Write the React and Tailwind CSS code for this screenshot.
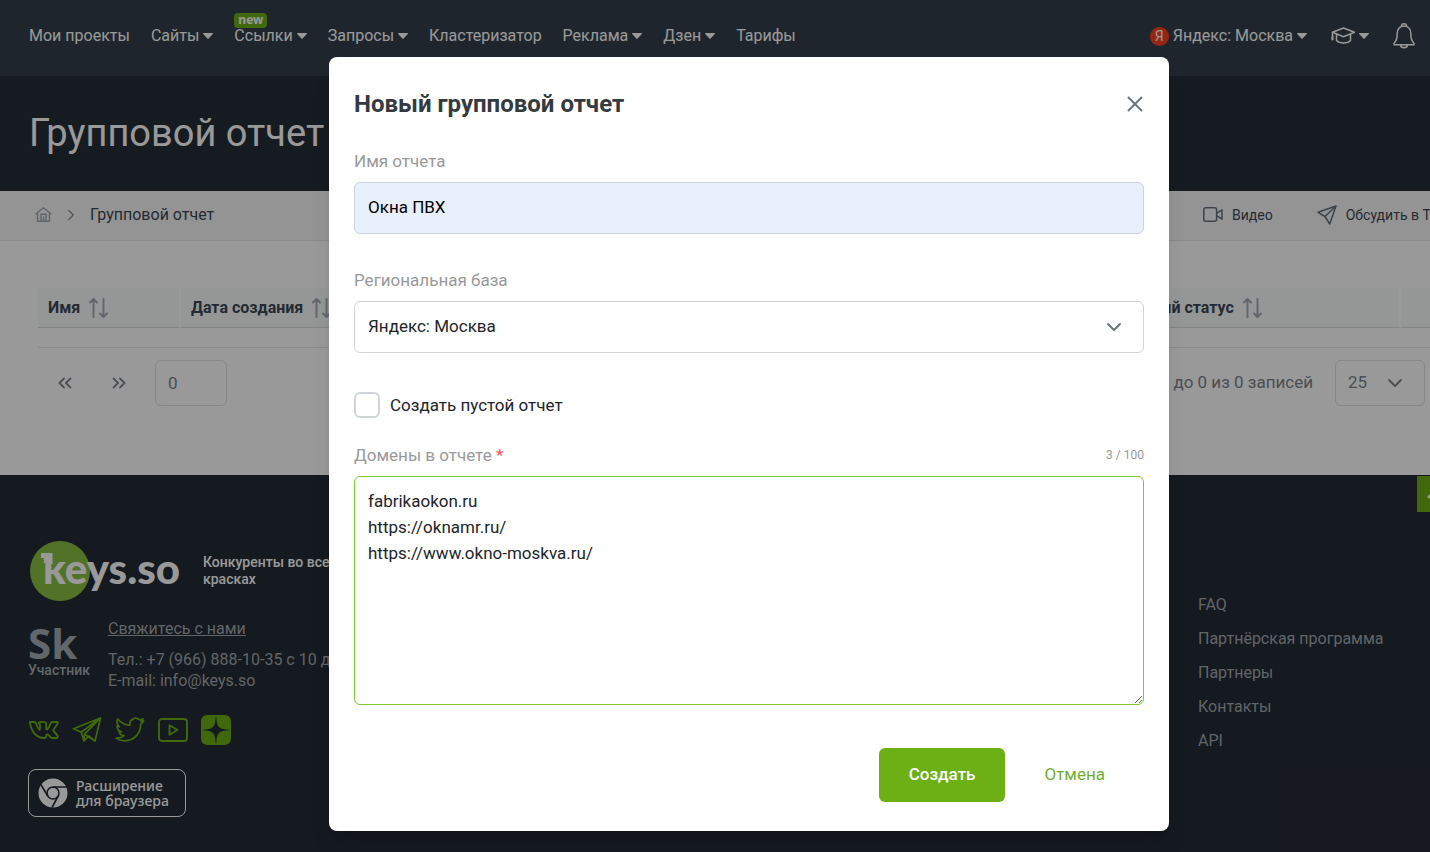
import React from 'react';
import { X, ChevronDown, ChevronRight, ChevronsLeft, ChevronsRight } from 'lucide-react';

const navItems = [
  { title: 'Мои проекты' },
  { title: 'Сайты', menu: true },
  { title: 'Ссылки', menu: true, isNew: true },
  { title: 'Запросы', menu: true },
  { title: 'Кластеризатор' },
  { title: 'Реклама', menu: true },
  { title: 'Дзен', menu: true },
  { title: 'Тарифы' },
];

const footerLinks = ['FAQ', 'Партнёрская программа', 'Партнеры', 'Контакты', 'API'];

const Caret = () => (
  <svg width="10" height="6" viewBox="0 0 10 6" fill="currentColor" aria-hidden="true">
    <path d="M.6 0h8.800c.6 0 .8.600.4 1L5.600 5.600a.8.8 0 0 1-1.200 0L.2 1C-.2.600 0 0 .600 0z" />
  </svg>
);

const CapIcon = () => (
  <svg width="24" height="18" viewBox="0 0 24 18" fill="none" stroke="currentColor" strokeWidth="1.500" strokeLinejoin="round" strokeLinecap="round" aria-hidden="true">
    <path d="M12.500 1 1.500 5.300l11 4.500 11-4.500z" />
    <path d="M5.500 7.200v6.300c3 3.300 11 3.300 14 0V7.200M1.500 5.500V10" />
    <path d="M1.500 10v2.500" strokeWidth="2.200" />
  </svg>
);

const BellIcon = () => (
  <svg width="22" height="26" viewBox="0 0 22 26" fill="none" stroke="currentColor" strokeWidth="1.500" strokeLinejoin="round" aria-hidden="true">
    <path d="M8.500 3c0-1.400 1-2.200 2.500-2.200s2.500.8 2.500 2.200" />
    <path d="M11 3C6.500 3 4.200 6.500 4.200 10.500c0 6.500-1.200 8-3.200 9.800v1.500h20v-1.500c-2-1.800-3.200-3.300-3.200-9.800C17.800 6.500 15.500 3 11 3z" />
    <path d="M7.500 22c.3 1.700 1.600 2.700 3.500 2.700s3.200-1 3.500-2.700" />
  </svg>
);

const HomeIcon = () => (
  <svg width="17" height="15" viewBox="0 0 17 15" fill="none" stroke="currentColor" strokeWidth="1.400" strokeLinejoin="round" aria-hidden="true">
    <path d="M.6 7.300 8.500.8l7.900 6.500M2.500 6v8.300h12V6M6 14V7.200h5V14M8.500 14V9.500" />
  </svg>
);

const VideoIcon = () => (
  <svg width="20" height="15" viewBox="0 0 20 15" fill="none" stroke="currentColor" strokeWidth="1.500" strokeLinejoin="round" className="text-[#66707c]" aria-hidden="true">
    <rect x=".8" y=".8" width="12.800" height="13.400" rx="2" />
    <path d="M13.600 6.300 19 2.800v9.400l-5.400-3.500" />
  </svg>
);

const PlaneIcon = () => (
  <svg width="20" height="20" viewBox="0 0 20 20" fill="none" stroke="currentColor" strokeWidth="1.500" strokeLinejoin="round" className="text-[#66707c]" aria-hidden="true">
    <path d="M19 1 1 7.300l7 4.200L12.700 19zM19 1 8 11.500" />
  </svg>
);

const SortIcon = () => (
  <svg width="19" height="20" viewBox="0 0 19 20" fill="none" stroke="currentColor" strokeWidth="1.900" strokeLinejoin="round" strokeLinecap="round" className="text-[#a0a9b3]" aria-hidden="true">
    <path d="M4.500 19V1M1 4.500 4.500 1 8 4.500M14.500 1v18M11 15.500l3.500 3.500 3.500-3.500" />
  </svg>
);

const VkIcon = () => (
  <svg width="30" height="18" viewBox="0 0 30 18" fill="none" stroke="currentColor" strokeWidth="1.800" strokeLinejoin="round" aria-hidden="true">
    <path d="M1.200 1h4.300c.8 0 1.200.6 1.500 1.300C8 5 9 7.500 10.200 8.600c.4.300.8.200.8-.4V4c0-1.300-.4-1.700-1.500-2.300C10.500 1 12 .9 14 .9c2.500 0 3.200.4 3.200 1.900v5c0 .8.600.9 1 .5 1.500-1.500 2.700-4 3.500-6 .3-.8.700-1.300 1.500-1.300H28c.9 0 1.100.5.800 1.200-.8 2-2.600 4.300-4.300 6.300-.5.600-.5.900 0 1.500 1.500 1.500 3 3 4 4.800.6 1-.1 2.200-1.300 2.200h-3.700c-1 0-1.600-.4-2.300-1.200-1-1.100-2-2.500-3-2.500-.8 0-1 .6-1 1.500 0 1.600-.3 2.200-1.700 2.200C8 17 3 11.500 1 2.500.8 1.500.7 1 1.200 1z" />
  </svg>
);

const TelegramIcon = () => (
  <svg width="30" height="26" viewBox="0 0 30 26" fill="none" stroke="currentColor" strokeWidth="1.700" strokeLinejoin="round" aria-hidden="true">
    <path d="M28.500 1 1.500 11.800l7.700 3.400L12 24l4.600-5L23 24zM9.200 15.200 28.500 1 12.500 17.200 23 24M12.500 17.200 12 24" />
  </svg>
);

const TwitterIcon = () => (
  <svg width="30" height="26" viewBox="0 0 30 26" fill="none" stroke="currentColor" strokeWidth="1.700" strokeLinejoin="round" aria-hidden="true">
    <path d="M28.500 3.800c-.9.400-1.700.6-2.500.7 1-.6 1.700-1.500 2-2.700-1 .6-2.200 1-3.300 1.200A5.700 5.700 0 0 0 15 8.200C10 8 5.800 5.700 2.800 2c-1.500 2.600-.8 6 1.700 7.700-.9 0-1.700-.2-2.500-.7 0 2.700 1.800 5 4.500 5.700-.8.200-1.700.2-2.500 0 .7 2.300 2.700 3.900 5.200 4C7 20.500 4 21.500 1 21.100c2.500 1.700 5.500 2.700 8.800 2.700 10 0 15.900-8.300 15.900-16.500 1.200-.9 2.100-2 2.800-3.500z" />
  </svg>
);

const YoutubeIcon = () => (
  <svg width="30" height="24" viewBox="0 0 30 24" fill="none" stroke="currentColor" strokeWidth="1.900" strokeLinejoin="round" aria-hidden="true">
    <rect x="1" y="1" width="28" height="22" rx="3" />
    <path d="M11.500 7.200v9.600l8-4.800z" />
  </svg>
);

const ZenIcon = () => (
  <svg width="30" height="30" viewBox="0 0 30 30" fill="currentColor" fillRule="evenodd" aria-hidden="true">
    <path d="M8 0h14c6 0 8 2 8 8v14c0 6-2 8-8 8H8c-6 0-8-2-8-8V8C0 2 2 0 8 0zM14.700 1.500c-.3 10.500-2.700 12.900-13.200 13.200v.6c10.500.3 12.900 2.700 13.200 13.200h.6c.3-10.500 2.700-12.900 13.200-13.200v-.6c-10.500-.3-12.900-2.700-13.200-13.200z" />
  </svg>
);

const ChromeIcon = () => (
  <svg width="30" height="30" viewBox="0 0 30 30" aria-hidden="true">
    <circle cx="15" cy="15" r="14.500" fill="#fff" />
    <g fill="none" stroke="#242b36" strokeWidth="1.600">
      <circle cx="15" cy="15" r="6" />
      <path d="M15 9h14M9.800 18 2.500 6M20.200 18 14 29.500" />
    </g>
  </svg>
);

const KeysLogo = () => (
  <svg width="156" height="60" viewBox="0 0 156 60" aria-label="keys.so">
    <circle cx="30" cy="30" r="30" fill="#89be44" />
    <path d="M11 12h11.500v11H16v-1h-2.500l1-2-1-1 .5-2h-3z" fill="#fff" />
    <text x="13" y="43" fill="#fff" fontSize="42" fontWeight="900" fontFamily="Lato, sans-serif">keys.so</text>
  </svg>
);

const SkLogo = () => (
  <svg width="62" height="54" viewBox="0 0 62 54" fill="#a3acb4" aria-label="Sk Участник">
    <text x="0" y="33" fontSize="42" fontWeight="700" fontFamily="Open Sans, sans-serif">Sk</text>
    <text x="0" y="49" fontSize="14" fontWeight="500" fontFamily="Roboto, sans-serif">Участник</text>
  </svg>
);

const Header = () => (
  <header className="flex h-[76px] items-start bg-[#353f4b] pr-[83px] pl-[29px] text-base leading-6 text-white">
    <nav className="flex gap-[21px] pt-6">
      {navItems.map((item) => (
        <a key={item.title} href="#" className="relative flex items-center gap-1 whitespace-nowrap">
          {item.title}
          {item.menu && <Caret />}
          {item.isNew && (
            <span className="absolute -top-[11px] left-0 h-[15px] rounded-sm bg-[#6db015] px-1 font-['Noto_Sans',sans-serif] text-xs leading-[14px] font-bold">new</span>
          )}
        </a>
      ))}
    </nav>
    <div className="ml-auto flex items-center gap-6 pt-[23px]">
      <button className="flex items-center gap-1 whitespace-nowrap">
        <span className="flex size-[19px] items-center justify-center rounded-full bg-[#fc3f1d] text-sm">Я</span>
        Яндекс: Москва
        <Caret />
      </button>
      <button className="flex items-center gap-1" aria-label="Обучение">
        <CapIcon />
        <Caret />
      </button>
      <button aria-label="Уведомления">
        <BellIcon />
      </button>
    </div>
  </header>
);

const Breadcrumbs = () => (
  <div className="flex h-[50px] items-center border-b border-[#e4e6e8] bg-[#f7f7f7] pb-[2px] pl-[35px] text-[#3b4754]">
    <a href="#" className="text-[#a0a9b3]" aria-label="Главная">
      <HomeIcon />
    </a>
    <ChevronRight size={18} strokeWidth={1.800} className="mx-[10px] text-[#8a939d]" />
    <span className="text-base">Групповой отчет</span>
    <div className="ml-auto flex w-[295px] gap-11 text-sm whitespace-nowrap">
      <a href="#" className="flex items-center gap-[9px]">
        <VideoIcon />
        Видео
      </a>
      <a href="#" className="flex items-center gap-[9px]">
        <PlaneIcon />
        Обсудить в Telegram
      </a>
    </div>
  </div>
);

const HeadCell = ({ title, className }) => (
  <th className={`h-10 border-r-2 border-b border-r-white border-b-[#d5dadd] bg-[#f9fcfb] px-[10px] text-left font-bold ${className}`}>
    <span className="flex items-center gap-[9px] whitespace-nowrap">
      {title}
      {title && <SortIcon />}
    </span>
  </th>
);

const ReportsTable = () => (
  <section className="px-[38px] pt-[47px] pb-[69px]">
    <table className="w-full table-fixed border-separate border-spacing-0 text-base text-[#3b4754]">
      <thead>
        <tr>
          <HeadCell title="Имя" className="w-[143px]" />
          <HeadCell title="Дата создания" className="w-[300px]" />
          <HeadCell title="Домены" className="" />
          <HeadCell title="Текущий статус" className="w-[298px]" />
          <HeadCell title="" className="w-[59px]" />
        </tr>
      </thead>
      <tbody>
        <tr>
          <td colSpan={5} className="h-5 border-b border-[#e4e6e8]" />
        </tr>
      </tbody>
    </table>
    <div className="flex items-center pt-3 pr-[35px] text-[17px] text-[#7c838b]">
      <button className="ml-4 text-[#7c838b]" aria-label="Первая страница">
        <ChevronsLeft size={22} strokeWidth={2} />
      </button>
      <button className="ml-8 text-[#7c838b]" aria-label="Последняя страница">
        <ChevronsRight size={22} strokeWidth={2} />
      </button>
      <input
        aria-label="Страница"
        defaultValue="0"
        className="ml-[25px] h-[46px] w-[72px] rounded-md border border-[#dcdfe3] px-3"
      />
      <span className="ml-auto">Показано с 0 до 0 из 0 записей</span>
      <div className="relative ml-[22px]">
        <select aria-label="Записей на странице" className="h-[46px] w-[90px] appearance-none rounded-md border border-[#dcdfe3] px-3">
          <option>25</option>
          <option>50</option>
        </select>
        <ChevronDown size={24} strokeWidth={1.800} className="pointer-events-none absolute top-[11px] right-[18px]" />
      </div>
    </div>
  </section>
);

const Footer = () => (
  <footer className="relative flex grow justify-between bg-[#242b36] pt-[66px] pl-7 text-base leading-[21px] text-[#a3a8ac]">
    <div className="w-[500px]">
      <div className="flex items-center gap-[17px]">
        <a href="#" className="ml-[2px]">
          <KeysLogo />
        </a>
        <p className="w-[150px] text-sm leading-[17px] font-medium text-white">Конкуренты во всех красках</p>
      </div>
      <div className="mt-[17px] flex gap-[18px]">
        <div className="pt-2">
          <SkLogo />
        </div>
        <div className="whitespace-nowrap">
          <a href="#" className="underline">Свяжитесь с нами</a>
          <p className="mt-[10px]">Тел.: +7 (966) 888-10-35 с 10 до 19</p>
          <p>E-mail: info@keys.so</p>
        </div>
      </div>
      <div className="mt-6 flex items-center gap-[13px] pl-px text-[#6db015]">
        <a href="#" aria-label="ВКонтакте"><VkIcon /></a>
        <a href="#" aria-label="Telegram"><TelegramIcon /></a>
        <a href="#" aria-label="Twitter"><TwitterIcon /></a>
        <a href="#" aria-label="YouTube"><YoutubeIcon /></a>
        <a href="#" aria-label="Дзен"><ZenIcon /></a>
      </div>
      <a
        href="#"
        className="mt-6 flex h-12 w-[158px] items-center gap-2 rounded-lg border border-white pl-[9px] font-['Noto_Sans',sans-serif] text-sm leading-[15px] font-medium text-white"
      >
        <ChromeIcon />
        <span>Расширение<br />для браузера</span>
      </a>
    </div>
    <ul className="flex w-[300px] flex-col gap-[13px] pt-[53px]">
      {footerLinks.map((link) => (
        <li key={link}>
          <a href="#">{link}</a>
        </li>
      ))}
    </ul>
    <button className="absolute top-px right-[45px] flex size-9 items-center justify-center bg-[#6db015] text-white" aria-label="Наверх">
      <svg width="16" height="10" viewBox="0 0 16 10" fill="none" stroke="currentColor" strokeWidth="3" strokeLinecap="round" strokeLinejoin="round">
        <path d="m2 8 6-6 6 6" />
      </svg>
    </button>
  </footer>
);

const ReportModal = () => (
  <form
    role="dialog"
    aria-labelledby="modal-title"
    className="w-[840px] rounded-lg bg-white px-[25px] pt-[25px] pb-[29px] text-[17px] text-[#212529] shadow-xl"
  >
    <div className="flex h-11 items-center justify-between">
      <h2 id="modal-title" className="text-2xl font-bold text-[#343a40]">Новый групповой отчет</h2>
      <button type="button" aria-label="Закрыть" className="-mr-1 text-[#6c757d]">
        <X size={26} strokeWidth={1.800} />
      </button>
    </div>

    <label htmlFor="name" className="mt-[23px] block leading-6 text-[#999]">Имя отчета</label>
    <input
      id="name"
      defaultValue="Окна ПВХ"
      className="mt-[9px] block h-[52px] w-full rounded-md border border-[#ced4da] bg-[#e8f0fe] px-[13px] pb-[2px] text-black"
    />

    <label htmlFor="region" className="mt-[34px] block leading-6 text-[#999]">Региональная база</label>
    <div className="relative mt-[9px]">
      <select id="region" className="block h-[52px] w-full appearance-none rounded-md border border-[#ced4da] bg-white px-[13px]">
        <option>Яндекс: Москва</option>
      </select>
      <ChevronDown size={24} strokeWidth={2} className="pointer-events-none absolute top-[14px] right-[18px] text-[#6c757d]" />
    </div>

    <div className="mt-[39px] flex items-center gap-[10px]">
      <input id="empty" type="checkbox" className="size-[26px] appearance-none rounded-md border-2 border-[#ced4da] bg-white" />
      <label htmlFor="empty" className="leading-6">Создать пустой отчет</label>
    </div>

    <div className="mt-[25px] flex items-center justify-between text-[#999]">
      <label htmlFor="domains" className="leading-6">
        Домены в отчете <span className="text-[#ff5252]">*</span>
      </label>
      <span className="text-xs">3 / 100</span>
    </div>
    <textarea
      id="domains"
      defaultValue={'fabrikaokon.ru\nhttps://oknamr.ru/\nhttps://www.okno-moskva.ru/'}
      className="mt-[9px] block h-[229px] w-full resize-y rounded-md border border-[#7fc82d] px-[13px] py-[11px] leading-[26px]"
    />

    <div className="mt-[43px] flex justify-end">
      <button type="button" className="h-[54px] rounded-md bg-[#6db015] px-[30px] font-medium text-white">Создать</button>
      <button type="button" className="h-[54px] px-[39px] text-[#6fae35]">Отмена</button>
    </div>
  </form>
);

export default function App() {
  return (
    <div className="h-screen overflow-hidden font-[Roboto,sans-serif]">
      <div className="relative flex min-h-full min-w-[1498px] flex-col bg-white">
        <Header />
        <div className="flex h-[115px] items-center bg-[#252d39] pl-[29px]">
          <h1 className="text-[38px] text-white">Групповой отчет</h1>
        </div>
        <Breadcrumbs />
        <ReportsTable />
        <Footer />
        <div className="absolute inset-0 flex items-start justify-center bg-black/40 pt-[57px]">
          <ReportModal />
        </div>
      </div>
    </div>
  );
}
